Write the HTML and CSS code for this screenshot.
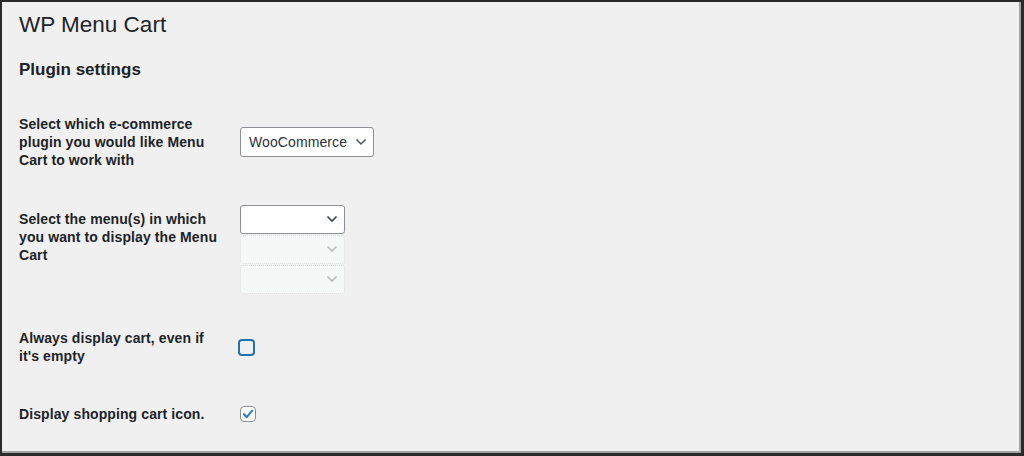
FILE: index.html
```html
<!DOCTYPE html>
<html lang="en">
<head>
<meta charset="utf-8">
<title>WP Menu Cart</title>
<link rel="stylesheet" href="styles.css">
</head>
<body>
<div class="frame">
  <div class="wrap">
    <h1 class="page-title">WP Menu Cart</h1>
    <h2 class="section-title">Plugin settings</h2>
    <div class="form-table">
      <div class="row">
        <div class="th">Select which e-commerce plugin you would like Menu Cart to work with</div>
        <div class="td td-middle">
          <div class="select select-wide">
            <span class="select-value">WooCommerce</span>
            <svg class="chev" width="12" height="8" viewBox="0 0 12 8"><path d="M1.5 1.5 L6 6 L10.5 1.5" fill="none" stroke="#50575e" stroke-width="1.5"/></svg>
          </div>
        </div>
      </div>
      <div class="row">
        <div class="th">Select the menu(s) in which you want to display the Menu Cart</div>
        <div class="td td-top">
          <div class="select-stack">
            <div class="select select-narrow">
              <span class="select-value"></span>
              <svg class="chev" width="12" height="8" viewBox="0 0 12 8"><path d="M1.5 1.5 L6 6 L10.5 1.5" fill="none" stroke="#3c434a" stroke-width="1.6"/></svg>
            </div>
            <div class="select select-narrow select-disabled">
              <span class="select-value"></span>
              <svg class="chev" width="12" height="8" viewBox="0 0 12 8"><path d="M1.5 1.5 L6 6 L10.5 1.5" fill="none" stroke="#b8babc" stroke-width="1.6"/></svg>
            </div>
            <div class="select select-narrow select-disabled">
              <span class="select-value"></span>
              <svg class="chev" width="12" height="8" viewBox="0 0 12 8"><path d="M1.5 1.5 L6 6 L10.5 1.5" fill="none" stroke="#b8babc" stroke-width="1.6"/></svg>
            </div>
          </div>
        </div>
      </div>
      <div class="row">
        <div class="th">Always display cart, even if it's empty</div>
        <div class="td td-middle">
          <span class="checkbox checkbox-focus"></span>
        </div>
      </div>
      <div class="row">
        <div class="th">Display shopping cart icon.</div>
        <div class="td td-middle">
          <span class="checkbox">
            <svg width="16" height="16" viewBox="0 0 16 16"><path d="M3.3 8.2 L6.5 11.5 L12.8 4.2" fill="none" stroke="#2b78bd" stroke-width="2.3" stroke-linecap="round" stroke-linejoin="round"/></svg>
          </span>
        </div>
      </div>
    </div>
  </div>
</div>
</body>
</html>
```

FILE: styles.css
```css
* { box-sizing: border-box; }

html, body {
  margin: 0;
  padding: 0;
  background: #f0f0f1;
}

body {
  font-family: "Liberation Sans", Arial, sans-serif;
  color: #1d2327;
  font-size: 14px;
}

.frame {
  width: 1024px;
  height: 456px;
  border: 2px solid #2a2a2a;
  border-bottom-width: 3px;
  border-right-width: 3px;
  box-shadow: inset -2px -2px 0 #a3a3a3;
  background: #f0f0f1;
  overflow: hidden;
}

.wrap {
  padding: 0 17px;
}

.page-title {
  margin: 0;
  padding-top: 8px;
  font-size: 22.5px;
  font-weight: 400;
  line-height: 30px;
  color: #1d2327;
}

.section-title {
  margin: 18px 0 0;
  font-size: 17px;
  font-weight: 700;
  line-height: 24px;
  color: #1d2327;
}

.form-table {
  margin-top: 13px;
  display: flex;
  flex-direction: column;
}

.row {
  display: flex;
  align-items: stretch;
}

.th {
  width: 210px;
  flex: none;
  padding: 20px 10px 20px 0;
  font-weight: 700;
  font-size: 14px;
  line-height: 18.2px;
  letter-spacing: 0.1px;
  color: #1d2327;
}

.td {
  padding: 15px 10px 15px 11px;
  display: flex;
  flex-direction: column;
}

.td-middle { justify-content: center; }
.td-top { justify-content: flex-start; }

.select-stack {
  display: flex;
  flex-direction: column;
  gap: 1px;
}

.select {
  height: 30px;
  border: 1px solid #8c8f94;
  border-radius: 3px;
  background: #fff;
  display: flex;
  align-items: center;
  justify-content: space-between;
  padding: 0 6px 0 8px;
  font-size: 14px;
  letter-spacing: 0.1px;
  color: #2c3338;
}

.select-wide { width: 134px; }
.select-narrow { width: 105px; height: 29px; }

.select-disabled {
  background: #f6f7f7;
  border: 1px dotted #dcdcde;
}

.chev { flex: none; }

.checkbox {
  width: 16px;
  height: 16px;
  border: 1px solid #8c8f94;
  border-radius: 4px;
  background: #fff;
  display: flex;
  align-items: center;
  justify-content: center;
}

.checkbox svg { display: block; }

.checkbox-focus {
  width: 17px;
  height: 17px;
  margin-left: -2px;
  margin-top: 2px;
  border: 2px solid #2271b1;
  border-radius: 4px;
  background: #f0f0f1;
}
```
